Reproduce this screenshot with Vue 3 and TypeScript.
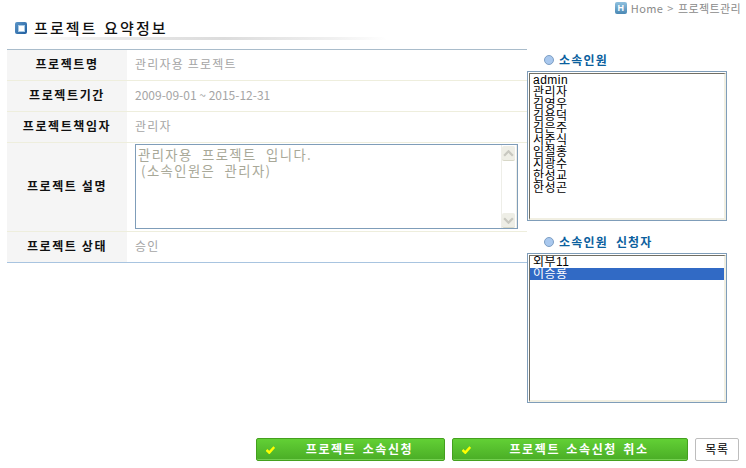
<script setup lang="ts">
const rows: { label: string; value: string; narrow?: boolean }[] = [
  { label: '프로젝트명', value: '관리자용 프로젝트' },
  { label: '프로젝트기간', value: '2009-09-01 ~ 2015-12-31', narrow: true },
  { label: '프로젝트책임자', value: '관리자' }
]
const members: string[] = ['admin', '관리자', '김영우', '김용덕', '김은주', '서준식', '임철홍', '지광수', '한성교', '한성곤']
const applicants: string[] = ['외부11', '이승룡']
</script>

<template>
  <div class="page">
    <div class="crumb">
      <span class="h-icon">H</span>
      <span>Home</span>
      <span class="sep">&gt;</span>
      <span>프로젝트관리</span>
    </div>

    <div class="content">
      <div class="left">
        <div class="title-block">
          <div class="title">
            <span class="title-icon"><i></i></span>
            <h1>프로젝트 요약정보</h1>
          </div>
          <div class="title-line"></div>
        </div>

        <div class="table">
          <div v-for="row in rows" :key="row.label" class="row">
            <div class="label">{{ row.label }}</div>
            <div class="value" :class="{ narrow: row.narrow }">{{ row.value }}</div>
          </div>
          <div class="row row-desc">
            <div class="label">프로젝트 설명</div>
            <div class="value value-desc">
              <div class="textarea">
                <div class="textarea-text">관리자용 프로젝트 입니다.<br /><span class="indent">(소속인원은 관리자)</span></div>
                <div class="scrollbar">
                  <span class="sb-btn">
                    <svg width="11" height="7" viewBox="0 0 12 8"><path d="M1 6.5 L6 1.5 L11 6.5" fill="none" stroke="#c8c8c0" stroke-width="2.6" /></svg>
                  </span>
                  <span class="sb-btn">
                    <svg width="11" height="7" viewBox="0 0 12 8"><path d="M1 1.5 L6 6.5 L11 1.5" fill="none" stroke="#c8c8c0" stroke-width="2.6" /></svg>
                  </span>
                </div>
              </div>
            </div>
          </div>
          <div class="row row-last">
            <div class="label">프로젝트 상태</div>
            <div class="value">승인</div>
          </div>
        </div>
      </div>

      <div class="right">
        <h2 class="side-head"><span class="bullet"></span>소속인원</h2>
        <div class="listbox">
          <div class="listbox-inner">
            <div v-for="m in members" :key="m" class="opt">{{ m }}</div>
          </div>
        </div>
        <h2 class="side-head second"><span class="bullet"></span>소속인원 신청자</h2>
        <div class="listbox">
          <div class="listbox-inner">
            <div v-for="(a, i) in applicants" :key="a" class="opt" :class="{ selected: i === 1 }">{{ a }}</div>
          </div>
        </div>
      </div>
    </div>

    <div class="footer">
      <button class="btn-green b1" type="button">
        <svg class="check" width="9" height="8" viewBox="0 0 9 8"><path d="M0.5 4 L3.3 6.6 L8.3 1" fill="none" stroke="#ffff00" stroke-width="2.5" /></svg>
        <span>프로젝트 소속신청</span>
      </button>
      <button class="btn-green b2" type="button">
        <svg class="check" width="9" height="8" viewBox="0 0 9 8"><path d="M0.5 4 L3.3 6.6 L8.3 1" fill="none" stroke="#ffff00" stroke-width="2.5" /></svg>
        <span>프로젝트 소속신청 취소</span>
      </button>
      <button class="btn-list" type="button">목록</button>
    </div>
  </div>
</template>

<style>
html,
body {
  margin: 0;
  background: #fff;
}
</style>

<style scoped>
.page {
  width: 746px;
  height: 468px;
  display: flex;
  flex-direction: column;
  overflow: hidden;
  font-family: 'Noto Sans CJK KR', 'Liberation Sans', sans-serif;
  font-size: 12px;
  background: #fff;
}

.crumb {
  height: 16px;
  padding-right: 5px;
  display: flex;
  justify-content: flex-end;
  align-items: center;
  gap: 3px;
  color: #8a8a8a;
  font-size: 11px;
  letter-spacing: 0.4px;
  line-height: 16px;
  box-sizing: border-box;
}

.h-icon {
  width: 12px;
  height: 12px;
  margin-right: 1px;
  border-radius: 2px;
  background: linear-gradient(#8fc0de, #4a88b4);
  color: #fff;
  font: bold 9px/12px 'Liberation Sans', sans-serif;
  letter-spacing: 0;
  text-align: center;
}

.sep {
  color: #999;
  padding: 0 1px;
}

.content {
  flex: 1;
  display: flex;
  padding-left: 7px;
  min-height: 0;
}

.left {
  width: 520px;
}

.title-block {
  height: 33px;
  box-sizing: border-box;
  padding-top: 5px;
}

.title {
  display: flex;
  align-items: center;
  gap: 7px;
  height: 14px;
  padding-left: 8px;
}

.title-icon {
  width: 12px;
  height: 12px;
  border-radius: 2px;
  background: linear-gradient(135deg, #5d96c8, #1e5d9e);
  display: flex;
  align-items: center;
  justify-content: center;
}

.title-icon i {
  width: 5px;
  height: 5px;
  background: #fff;
  box-shadow: 0 0 0 1px #a9cbe6;
}

.title h1 {
  margin: 0;
  font-size: 15px;
  font-weight: 500;
  line-height: 14px;
  letter-spacing: 2.1px;
  word-spacing: 1px;
  color: #111;
}

.title-line {
  height: 3px;
  margin: 2px 0 0 18px;
  width: 362px;
  background: linear-gradient(90deg, #fff 0%, #e8e8e8 25%, #dcdcdc 55%, #f0f0f0 85%, #fff 100%);
}

.table {
  border-top: 1px solid #a9bccb;
  border-bottom: 1px solid #a8c4e0;
}

.row {
  display: flex;
  height: 31px;
  box-sizing: border-box;
  border-bottom: 1px solid #eeeedd;
}

.row-desc {
  height: 89px;
}

.row-last {
  height: 30px;
  border-bottom: 0;
}

.label {
  width: 120px;
  flex: none;
  box-sizing: border-box;
  padding-bottom: 3px;
  display: flex;
  align-items: center;
  justify-content: center;
  background: #f5f5f5;
  font-weight: 700;
  color: #111;
  letter-spacing: 1.6px;
}

.value {
  flex: 1;
  padding: 0 0 3px 8px;
  display: flex;
  align-items: center;
  color: #a5a5a5;
  letter-spacing: 1.2px;
}

.value.narrow {
  letter-spacing: 0;
}

.value-desc {
  align-items: flex-start;
  padding: 1px 0 0 8px;
}

.textarea {
  width: 383px;
  height: 85px;
  box-sizing: border-box;
  border: 1px solid #7f9db9;
  display: flex;
}

.textarea-text {
  flex: 1;
  padding: 2px 0 0 2px;
  font-size: 13.33px;
  line-height: 16px;
  letter-spacing: 1.4px;
  word-spacing: 5px;
  color: #a8a898;
}

.indent {
  margin-left: 3px;
}

.scrollbar {
  width: 16px;
  flex: none;
  box-sizing: border-box;
  border-left: 1px solid #eeeee8;
  border-right: 1px solid #eeeee8;
  padding: 1px 1px 0 0;
  display: flex;
  flex-direction: column;
  justify-content: space-between;
}

.sb-btn {
  height: 15px;
  box-sizing: border-box;
  background: #eeeee6;
  border-bottom: 1px solid #d8d8c8;
  border-radius: 2px;
  display: flex;
  align-items: center;
  justify-content: center;
}

.right {
  width: 200px;
  padding-top: 36px;
}

.side-head {
  margin: 0;
  height: 19px;
  padding: 0 0 4px 17px;
  box-sizing: border-box;
  display: flex;
  align-items: center;
  gap: 5px;
  font-size: 12px;
  font-weight: 700;
  line-height: 14px;
  letter-spacing: 1.2px;
  word-spacing: 4px;
  color: #0b5f9e;
}

.side-head.second {
  margin-top: 13px;
}

.bullet {
  width: 10px;
  height: 10px;
  box-sizing: border-box;
  border-radius: 50%;
  background: #a9c8ee;
  border: 1px solid #7e9fc4;
}

.listbox {
  height: 150px;
  box-sizing: border-box;
  border: 1px solid #7f9db9;
  padding: 1px 0 0 1px;
}

.listbox-inner {
  height: 100%;
  box-sizing: border-box;
  border-style: solid;
  border-width: 1px 2px 2px 1px;
  border-color: #716f64 #f1efe2 #f1efe2 #716f64;
  overflow: hidden;
}

.opt {
  height: 12px;
  line-height: 12px;
  padding-left: 3px;
  font-family: 'Liberation Sans', 'Noto Sans CJK KR', sans-serif;
  color: #000;
  letter-spacing: 0.5px;
  white-space: nowrap;
}

.opt.selected {
  background: #316ac5;
  color: #fff;
}

.footer {
  display: flex;
  justify-content: flex-end;
  gap: 7px;
  padding: 0 7px 7px 0;
}

.btn-green {
  height: 23px;
  box-sizing: border-box;
  padding: 0 0 0 9px;
  display: flex;
  align-items: center;
  border: 1px solid #44a01e;
  border-radius: 2px;
  background: linear-gradient(#62d035, #4aad26);
  box-shadow: inset 0 -1px 0 #74d050;
  color: #fff;
  font: 700 12px 'Noto Sans CJK KR', sans-serif;
  letter-spacing: 1.6px;
  word-spacing: 2px;
}

.btn-green span {
  flex: 1;
  text-align: center;
  padding-bottom: 2px;
}

.check {
  flex: none;
}

.b1 {
  width: 189px;
}

.b2 {
  width: 236px;
}

.btn-list {
  width: 44px;
  height: 23px;
  padding: 0 0 2px;
  box-sizing: border-box;
  background: #fff;
  border: 1px solid #bdbdbd;
  border-radius: 2px;
  color: #000;
  font: 400 12px 'Noto Sans CJK KR', sans-serif;
  letter-spacing: 0.6px;
}
</style>
